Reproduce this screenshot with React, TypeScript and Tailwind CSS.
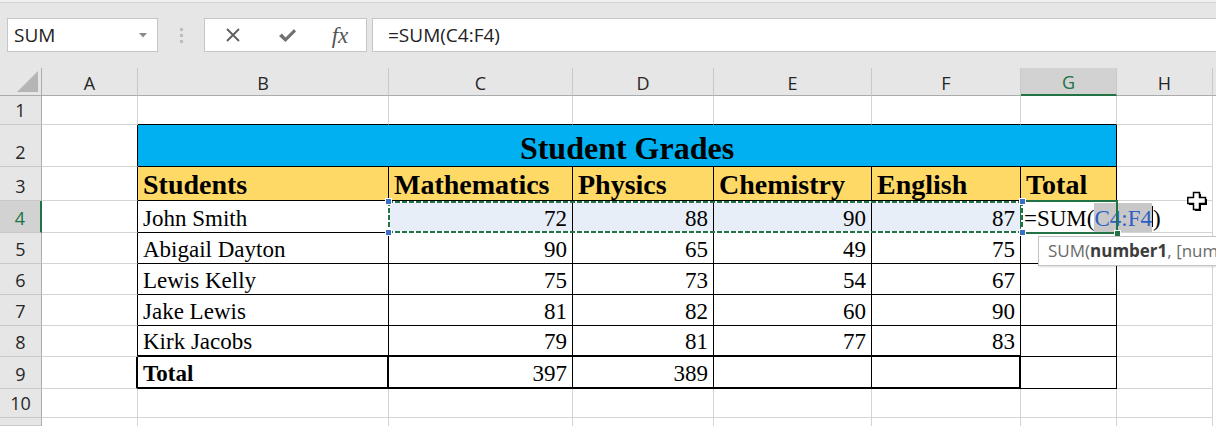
import { Fragment } from "react";

const COLS = ["A", "B", "C", "D", "E", "F", "G", "H"];
const ROWS = [1, 2, 3, 4, 5, 6, 7, 8, 9, 10, 11];

const TABLE: Record<number, (string | number)[]> = {
  3: ["Students", "Mathematics", "Physics", "Chemistry", "English", "Total"],
  4: ["John Smith", 72, 88, 90, 87, ""],
  5: ["Abigail Dayton", 90, 65, 49, 75, ""],
  6: ["Lewis Kelly", 75, 73, 54, 67, ""],
  7: ["Jake Lewis", 81, 82, 60, 90, ""],
  8: ["Kirk Jacobs", 79, 81, 77, 83, ""],
  9: ["Total", 397, 389, "", "", ""],
};

const serif = "font-['Liberation_Serif','Times_New_Roman',serif]";

// table occupies B2:G9, row 9 has a thick box around B9 and C9:F9
function rightBorder(r: number, c: number) {
  const inTable = r >= 2 && r <= 9;
  if (inTable && c === 0) return r === 9 ? "border-r-2 border-r-black" : "border-r border-r-black";
  if (inTable && c >= 1 && c <= 6) return r === 9 && (c === 1 || c === 5) ? "border-r-2 border-r-black" : "border-r border-r-black";
  return "border-r border-r-[#d4d4d4]";
}

function bottomBorder(r: number, c: number) {
  const tableCol = c >= 1 && c <= 6;
  if (r === 11) return "";
  if (r === 1 && tableCol) return "border-b border-b-black";
  if (r >= 2 && r <= 9 && tableCol) return (r === 8 || r === 9) && c <= 5 ? "border-b-2 border-b-black" : "border-b border-b-black";
  return "border-b border-b-[#d4d4d4]";
}

function ColHeader({ c }: { c: number }) {
  const active = c === 6;
  return (
    <div className={`flex items-end justify-center text-[18px] leading-[24px] border-r border-r-[#c9c9c9] ${active ? "bg-[#d2d2d2] text-[#217346] border-b-2 border-b-[#217346]" : "bg-[#e6e6e6] text-[#262626] border-b border-b-[#ababab]"}`}>
      {COLS[c]}
    </div>
  );
}

function RowHeader({ r }: { r: number }) {
  const active = r === 4;
  return (
    <div className={`flex items-end justify-center pb-[2px] text-[18px] leading-[24px] overflow-hidden border-b border-b-[#c9c9c9] ${active ? "bg-[#d2d2d2] text-[#217346] border-r-2 border-r-[#217346]" : "bg-[#e6e6e6] text-[#262626] border-r border-r-[#ababab]"}`}>
      {r < 11 ? r : ""}
    </div>
  );
}

function BodyCell({ r, c }: { r: number; c: number }) {
  const borders = `${rightBorder(r, c)} ${bottomBorder(r, c)} whitespace-nowrap`;
  const value = c >= 1 && c <= 6 ? TABLE[r]?.[c - 1] : undefined;

  if (r === 3 && c >= 1 && c <= 6) {
    return (
      <div className={`${borders} overflow-hidden bg-[#ffd966] flex items-end pl-[5px] pb-[1px] ${serif} text-[28px] font-bold leading-none text-black`}>
        {value}
      </div>
    );
  }

  // cell being edited: the formula runs over into H4
  if (r === 4 && c === 6) {
    return (
      <div className={`${borders} relative z-10 bg-white flex items-stretch pl-[3px] ${serif} text-[23px] leading-none text-black`}>
        <span className="flex items-end pb-[2px]">=SUM(</span>
        <span className="flex items-end pb-[2px] mt-[2px] bg-[#c8c8c8] text-[#2f5fc4]">C4:F4</span>
        <span className="w-px shrink-0 bg-black my-[5px]" />
        <span className="flex items-end pb-[2px]">)</span>
      </div>
    );
  }

  const selected = r === 4 && c >= 2 && c <= 5;
  const isNum = typeof value === "number";
  return (
    <div className={`${borders} overflow-hidden ${selected ? "bg-[#e8eef8]" : "bg-white"} flex items-end pb-[2px] ${isNum ? "justify-end pr-[5px]" : "pl-[5px]"} ${serif} text-[23px] leading-none text-black ${r === 9 && c === 1 ? "font-bold" : ""}`}>
      {value}
    </div>
  );
}

function Handle({ className }: { className: string }) {
  return <div className={`absolute w-[7px] h-[7px] bg-[#3b6fc6] border border-white ${className}`} />;
}

export default function App() {
  return (
    <div className="w-[1216px] h-[426px] overflow-hidden bg-[#e6e6e6] font-['Open_Sans','Noto_Sans',sans-serif]">
      {/* top strip */}
      <div className="h-[2px] bg-[#f1f1f1] border-b border-b-[#d2d2d2] box-content" />

      {/* formula bar */}
      <div className="h-[65px] pt-[15px] flex items-start">
        <div className="ml-[7px] w-[151px] h-[34px] bg-white border border-[#c6c6c6] flex items-center justify-between pl-[6px] pr-[10px]">
          <span className="text-[19px] text-[#222]">SUM</span>
          <svg width="8" height="5" viewBox="0 0 8 5">
            <path d="M0 0 L8 0 L4 4.5 Z" fill="#8a8a8a" />
          </svg>
        </div>
        <div className="w-[46px] h-[34px] flex flex-col items-center justify-center gap-[3px]">
          <span className="w-[3px] h-[3px] bg-[#bdbdbd]" />
          <span className="w-[3px] h-[3px] bg-[#bdbdbd]" />
          <span className="w-[3px] h-[3px] bg-[#bdbdbd]" />
        </div>
        <div className="w-[163px] h-[34px] bg-white border border-[#c6c6c6] flex items-center">
          <div className="w-[55px] flex justify-center">
            <svg width="16" height="16" viewBox="0 0 16 16">
              <path d="M2 2 L14 14 M14 2 L2 14" stroke="#5e5e5e" strokeWidth="1.8" />
            </svg>
          </div>
          <div className="w-[55px] flex justify-center">
            <svg width="19" height="15" viewBox="0 0 19 15">
              <path d="M1 8 L4 5.5 L7.5 9.5 L16 1 L18 3.5 L7.5 14 Z" fill="#717171" />
            </svg>
          </div>
          <div className="w-[50px] flex justify-center">
            <span className={`${serif} italic text-[23px] leading-none text-[#555]`}>fx</span>
          </div>
        </div>
        <div className="ml-[5px] flex-1 h-[34px] bg-white border border-[#c6c6c6] border-r-0 flex items-center pl-[15px]">
          <span className="text-[19px] text-[#222]">=SUM(C4:F4)</span>
        </div>
      </div>

      {/* sheet */}
      <div className="relative grid grid-cols-[42px_96px_251px_184px_141px_158px_149px_96px_96px_3px] grid-rows-[28px_29px_42px_34px_32px_31px_31px_31px_31px_32px_29px_8px]">
        <div className="bg-[#e6e6e6] border-r border-b border-r-[#ababab] border-b-[#ababab] flex items-end justify-end pr-[3px] pb-[3px]">
          <svg width="21" height="21" viewBox="0 0 21 21">
            <path d="M21 0 L21 21 L0 21 Z" fill="#b5b5b5" />
          </svg>
        </div>
        {COLS.map((_, c) => (
          <ColHeader key={c} c={c} />
        ))}
        <div className="bg-[#e6e6e6] border-b border-b-[#ababab]" />

        {ROWS.map((r) => (
          <Fragment key={r}>
            <RowHeader r={r} />
            {r === 2 ? (
              <>
                <BodyCell r={2} c={0} />
                <div className={`col-span-6 bg-[#00b0f0] border-r border-b border-black flex items-end justify-center pb-[2px] ${serif} text-[32px] font-bold leading-none text-black`}>
                  Student Grades
                </div>
                <BodyCell r={2} c={7} />
              </>
            ) : (
              COLS.map((_, c) => <BodyCell key={c} r={r} c={c} />)
            )}
            <div className="bg-white" />
          </Fragment>
        ))}

        {/* active cell G4 */}
        <div className="absolute z-20 left-[1020px] top-[132px] w-[98px] h-[34px] border-2 border-[#217346]" />
        <div className="absolute z-20 left-[1114px] top-[162px] w-[7px] h-[7px] bg-[#217346] border border-white" />

        {/* copy marquee C4:F4 */}
        <div className="absolute z-20 left-[388px] top-[133px] w-[635px] h-[32px]">
          <div className="absolute left-0 top-0 w-full h-[2px] bg-[repeating-linear-gradient(90deg,#217346_0_5px,#ffffff_5px_7px)]" />
          <div className="absolute left-0 bottom-0 w-full h-[2px] bg-[repeating-linear-gradient(90deg,#217346_0_5px,#ffffff_5px_7px)]" />
          <div className="absolute left-0 top-0 w-[2px] h-full bg-[repeating-linear-gradient(180deg,#217346_0_5px,#ffffff_5px_7px)]" />
          <div className="absolute right-0 top-0 w-[2px] h-full bg-[repeating-linear-gradient(180deg,#217346_0_5px,#ffffff_5px_7px)]" />
          <Handle className="left-[-3px] top-[-3px]" />
          <Handle className="left-[-3px] bottom-[-3px]" />
          <Handle className="right-[-3px] top-[-3px]" />
          <Handle className="right-[-3px] bottom-[-3px]" />
        </div>

        {/* function tooltip */}
        <div className="absolute z-20 left-[1038px] top-[168px] w-[200px] h-[30px] bg-white border border-[#c3c3c3] shadow-[1px_1px_2px_rgba(0,0,0,0.15)] flex items-center pl-[9px] whitespace-nowrap text-[17px] text-[#6a6a6a]">
          SUM(<span className="font-bold text-[#3c3c3c]">number1</span>, [num
        </div>

        {/* mouse cursor */}
        <svg className="absolute z-20 left-[1187px] top-[123px]" width="23" height="22" viewBox="0 0 23 22">
          <path d="M8 3 L14 3 L14 8 L20 8 L20 14 L14 14 L14 20 L8 20 L8 14 L2 14 L2 8 L8 8 Z" fill="#000" />
          <path d="M6.5 1.5 L12.5 1.5 L12.5 6.5 L18.5 6.5 L18.5 12.5 L12.5 12.5 L12.5 18.5 L6.5 18.5 L6.5 12.5 L0.8 12.5 L0.8 6.5 L6.5 6.5 Z" fill="#fff" stroke="#000" strokeWidth="1.5" />
        </svg>
      </div>
    </div>
  );
}
